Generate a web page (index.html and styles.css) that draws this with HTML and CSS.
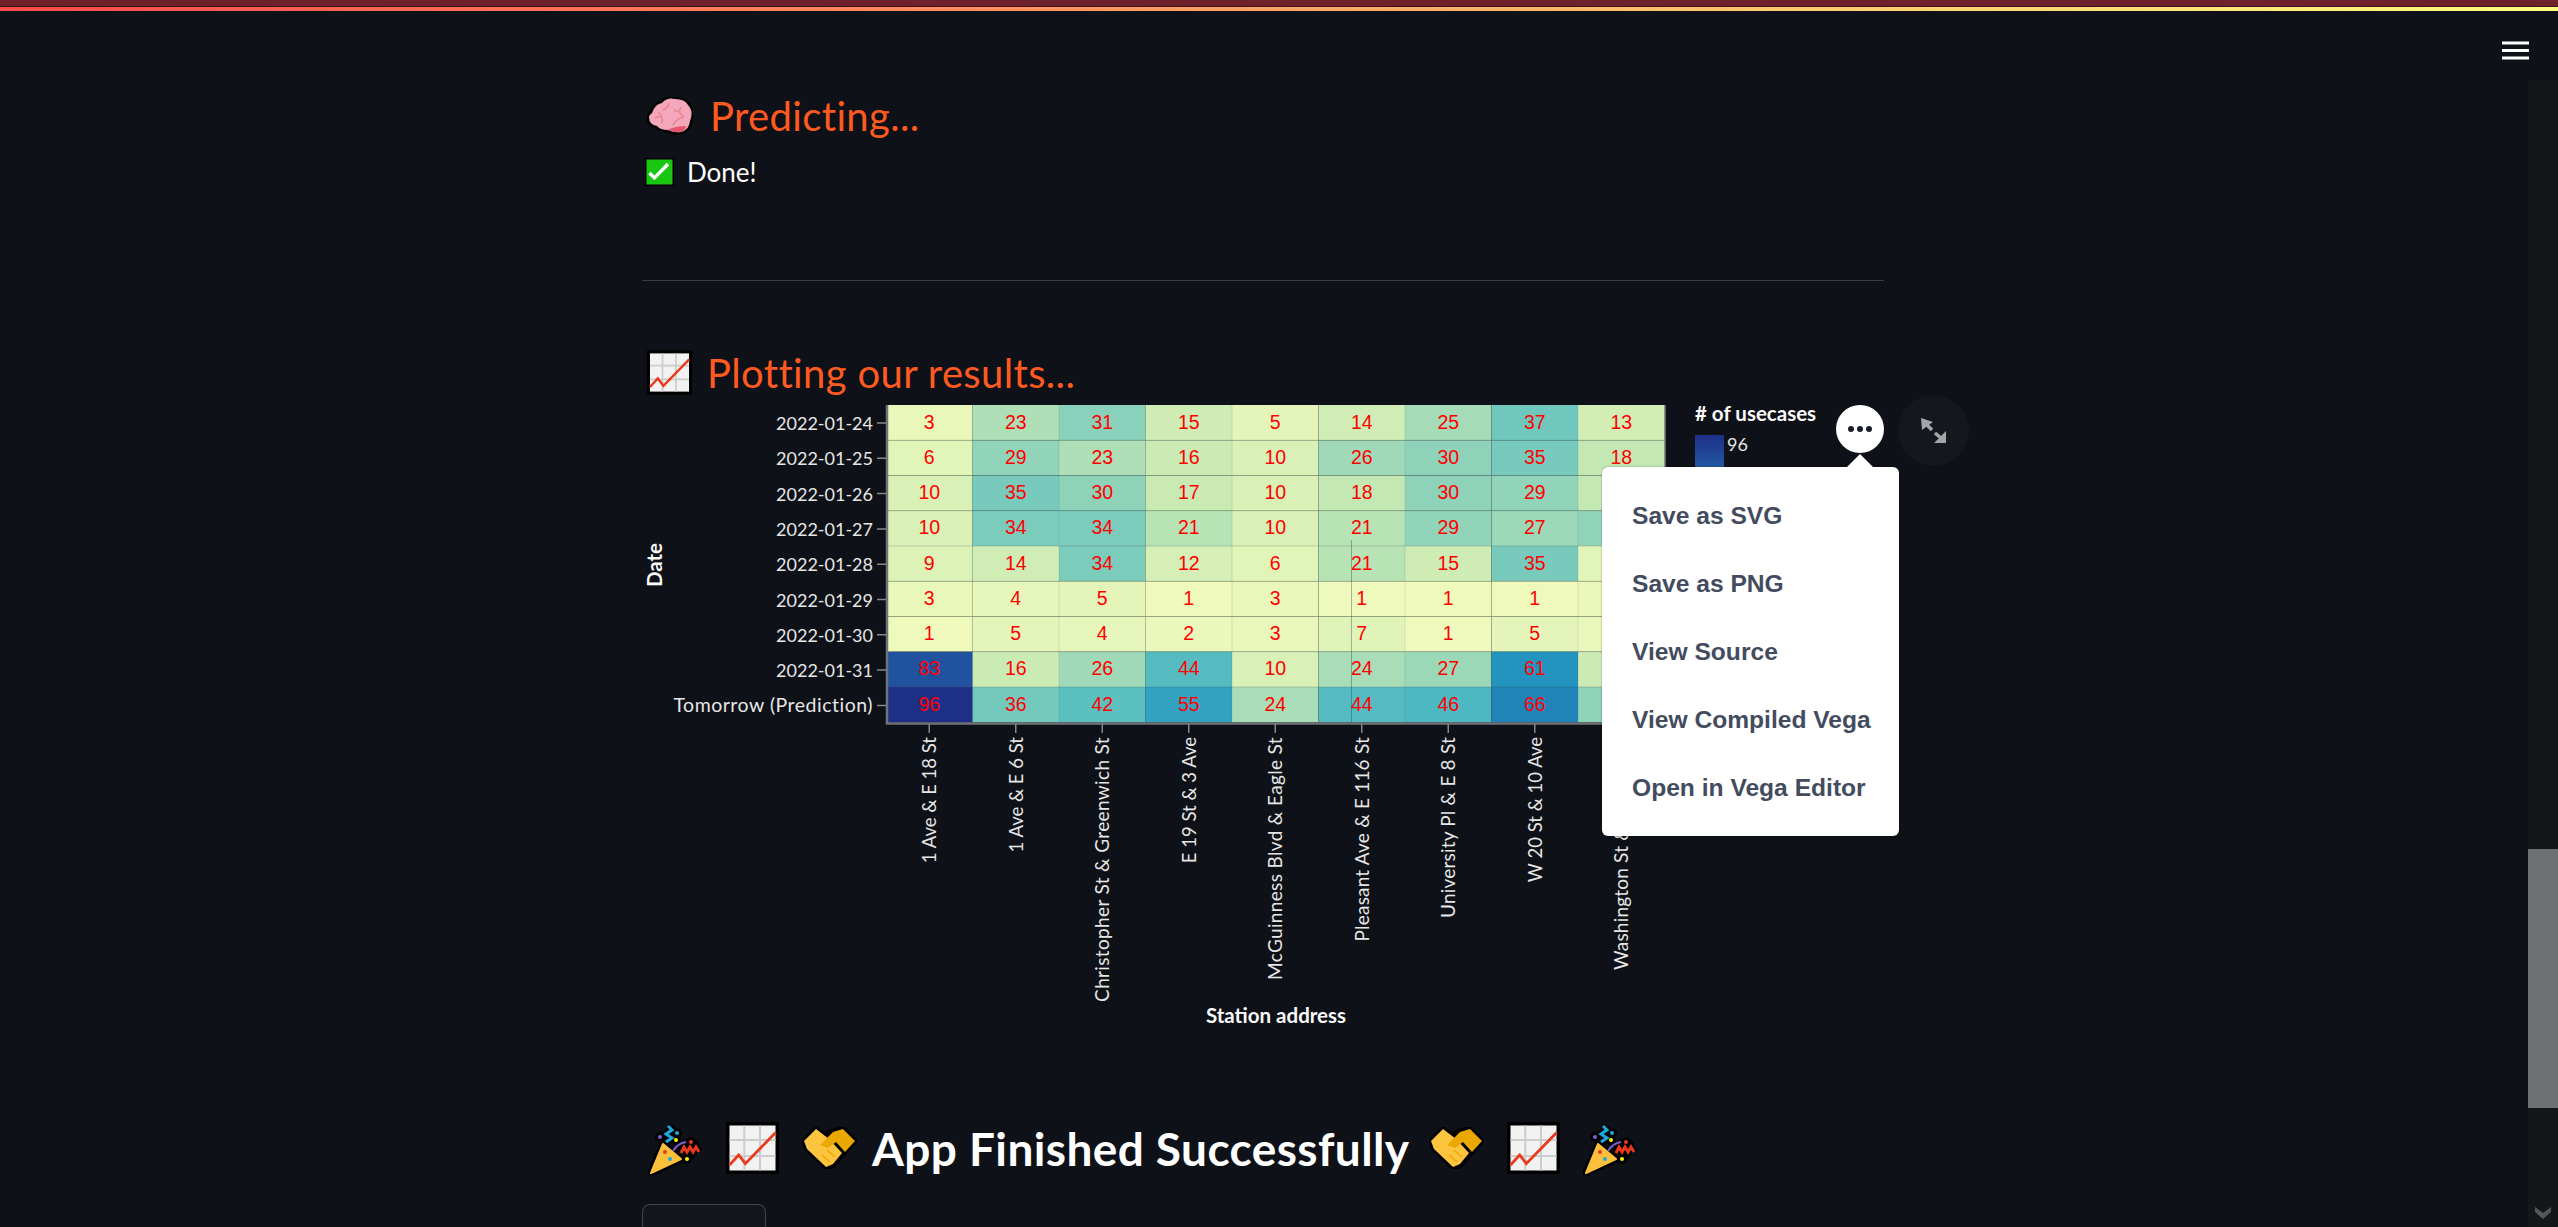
FILE: index.html
```html
<!DOCTYPE html>
<html lang="en">
<head>
<meta charset="utf-8">
<title>App</title>
<link rel="stylesheet" href="styles.css">
</head>
<body>
<svg class="defs" width="0" height="0">
  <symbol id="e-chart" viewBox="0 0 53 52">
    <rect width="53" height="52" fill="#000"/>
    <rect x="3.5" y="3.5" width="46" height="45" fill="#f2f2f2"/>
    <path d="M18.3 3.5V48.5M34 3.5V48.5M3.5 18H49.5M3.5 34H49.5" stroke="#ccc" stroke-width="2" fill="none"/>
    <path d="M3.5 43L12.7 33L19.3 41.7L49.7 10.5" stroke="#ea3a1c" stroke-width="2.8" fill="none"/>
  </symbol>
  <symbol id="e-brain" viewBox="0 0 46 38">
    <path d="M5 16Q8 7 15 6Q20 0 28 2Q38 2 41 8Q47 14 43 24Q42 33 34 35Q27 36 21 33Q13 33 10 29Q2 28 2 20Q2 18 5 16Z" fill="#f4a7ba" stroke="#000" stroke-width="5" paint-order="stroke"/>
    <path d="M21 33Q28 29 39 29Q38 34 34 35Q27 36 21 33Z" fill="#e2566f"/>
    <path d="M11 15Q16 19 15 26M8 21L14 19M22 6Q21 11 16 13M34 10Q30 16 37 20M37 20Q30 21 26 28M27 13L32 15" stroke="#e98692" stroke-width="1.6" fill="none"/>
  </symbol>
  <symbol id="e-check" viewBox="0 0 29 28">
    <rect width="29" height="28" fill="#000"/>
    <rect x="1.5" y="1.5" width="26" height="25" fill="#19c612"/>
    <path d="M4.5 15L9.5 20L23 6" stroke="#fff" stroke-width="3.3" fill="none"/>
  </symbol>
  <symbol id="e-popper" viewBox="0 0 55 55">
    <g fill="#000">
      <path d="M15 23L33 38L3 52Z" stroke="#000" stroke-width="7" stroke-linejoin="round"/>
      <path d="M20 5L24 9L18 13L24 17L18 21" stroke="#000" stroke-width="8" fill="none"/>
      <path d="M33 32L36 26L39 31L42 26L45 31L48 26L51 31" stroke="#000" stroke-width="8" fill="none"/>
      <circle cx="12" cy="16" r="5"/><circle cx="29" cy="12" r="5"/><circle cx="43" cy="21" r="5"/><circle cx="39" cy="38" r="5"/><circle cx="28" cy="19" r="5"/>
    </g>
    <path d="M15 23L33 38L3 52Z" fill="#fcbf3c" stroke="#fcbf3c" stroke-width="2" stroke-linejoin="round"/>
    <path d="M25 30Q30 22 38 21" stroke="#7a5fcf" stroke-width="2" fill="none"/>
    <path d="M20 5L24 9L18 13L24 17L18 21" stroke="#1ba9e0" stroke-width="3" fill="none"/>
    <path d="M33 32L36 26L39 31L42 26L45 31L48 26L51 31" stroke="#e8391c" stroke-width="3" fill="none"/>
    <circle cx="17" cy="31" r="2" fill="#e8391c"/><circle cx="22" cy="38" r="2" fill="#1ba9e0"/>
    <circle cx="12" cy="16" r="2" fill="#7a5fcf"/><circle cx="29" cy="12" r="2" fill="#1ba9e0"/>
    <circle cx="43" cy="21" r="2" fill="#e8391c"/><circle cx="39" cy="38" r="2" fill="#fff200"/><circle cx="28" cy="19" r="2" fill="#fff200"/>
  </symbol>
  <symbol id="e-hands" viewBox="0 0 55 42">
    <path d="M2 14L14 2L23 8L30 4L41 2L53 14L42 26L31 39L24 40L5 22Z" fill="#000" stroke="#000" stroke-width="5" stroke-linejoin="round"/>
    <path d="M2 14L14 2L27 12L40 26L31 37L24 40L5 22Z" fill="#fdc440"/>
    <path d="M53 14L41 2L31 5L18 18L26 21L34 15L43 25Z" fill="#eba800"/>
    <path d="M20 28L28 35M25 23L33 30" stroke="#eba800" stroke-width="1.5" fill="none"/>
  </symbol>
</svg>

<header class="header">
  <div class="topbar"></div>
  <div class="topbar-line"></div>
  <svg class="hamburger" width="27" height="19" viewBox="0 0 27 19">
    <path d="M0 2H27M0 9.5H27M0 17H27" stroke="#fff" stroke-width="3"/>
  </svg>
</header>

<div class="page">
  <main class="main">
    <h2 class="subhead first"><svg class="emoji brain"><use href="#e-brain"/></svg><span>Predicting...</span></h2>
    <div class="done"><svg class="emoji check"><use href="#e-check"/></svg><span>Done!</span></div>
    <hr class="rule">
    <h2 class="subhead plot"><svg class="emoji chart-s"><use href="#e-chart"/></svg><span>Plotting our results...</span></h2>

    <div class="chart-wrap">
      <svg class="chart" width="1242" height="660" viewBox="642 399 1242 660">
        <defs>
          <linearGradient id="legend" x1="0" y1="0" x2="0" y2="1">
            <stop offset="0" stop-color="#1e2f87"/>
            <stop offset="0.2" stop-color="#2260a9"/>
            <stop offset="0.4" stop-color="#2090bf"/>
            <stop offset="0.6" stop-color="#45b5c4"/>
            <stop offset="0.8" stop-color="#a5dbb7"/>
            <stop offset="1" stop-color="#eef9bb"/>
          </linearGradient>
        </defs>
        <g class="heat">
          <g transform="translate(0 405)">
            <rect x="886" fill="#e9f7ba"/><rect x="972.5" fill="#aedfb6"/><rect x="1059" fill="#89d1ba"/><rect x="1145.5" fill="#ceecb4"/><rect x="1232" fill="#e5f5b9"/><rect x="1318.5" fill="#d0edb5"/><rect x="1405" fill="#a5dbb7"/><rect x="1491.5" fill="#70c7bd"/><rect x="1578" fill="#d2eeb5"/>
            <text x="929.25" y="23.5">3</text><text x="1015.75" y="23.5">23</text><text x="1102.25" y="23.5">31</text><text x="1188.75" y="23.5">15</text><text x="1275.25" y="23.5">5</text><text x="1361.75" y="23.5">14</text><text x="1448.25" y="23.5">25</text><text x="1534.75" y="23.5">37</text><text x="1621.25" y="23.5">13</text>
          </g>
          <g transform="translate(0 440.25)">
            <rect x="886" fill="#e2f5b9"/><rect x="972.5" fill="#92d4b9"/><rect x="1059" fill="#aedfb6"/><rect x="1145.5" fill="#cbebb4"/><rect x="1232" fill="#d9f1b7"/><rect x="1318.5" fill="#a0d9b8"/><rect x="1405" fill="#8ed2ba"/><rect x="1491.5" fill="#78cabc"/><rect x="1578" fill="#c4e8b4"/>
            <text x="929.25" y="23.5">6</text><text x="1015.75" y="23.5">29</text><text x="1102.25" y="23.5">23</text><text x="1188.75" y="23.5">16</text><text x="1275.25" y="23.5">10</text><text x="1361.75" y="23.5">26</text><text x="1448.25" y="23.5">30</text><text x="1534.75" y="23.5">35</text><text x="1621.25" y="23.5">18</text>
          </g>
          <g transform="translate(0 475.5)">
            <rect x="886" fill="#d9f1b7"/><rect x="972.5" fill="#78cabc"/><rect x="1059" fill="#8ed2ba"/><rect x="1145.5" fill="#c9eab3"/><rect x="1232" fill="#d9f1b7"/><rect x="1318.5" fill="#c4e8b4"/><rect x="1405" fill="#8ed2ba"/><rect x="1491.5" fill="#92d4b9"/><rect x="1578" fill="#c4e8b4"/>
            <text x="929.25" y="23.5">10</text><text x="1015.75" y="23.5">35</text><text x="1102.25" y="23.5">30</text><text x="1188.75" y="23.5">17</text><text x="1275.25" y="23.5">10</text><text x="1361.75" y="23.5">18</text><text x="1448.25" y="23.5">30</text><text x="1534.75" y="23.5">29</text>
          </g>
          <g transform="translate(0 510.75)">
            <rect x="886" fill="#d9f1b7"/><rect x="972.5" fill="#7cccbc"/><rect x="1059" fill="#7cccbc"/><rect x="1145.5" fill="#b7e3b5"/><rect x="1232" fill="#d9f1b7"/><rect x="1318.5" fill="#b7e3b5"/><rect x="1405" fill="#92d4b9"/><rect x="1491.5" fill="#9bd8b8"/><rect x="1578" fill="#92d4b9"/>
            <text x="929.25" y="23.5">10</text><text x="1015.75" y="23.5">34</text><text x="1102.25" y="23.5">34</text><text x="1188.75" y="23.5">21</text><text x="1275.25" y="23.5">10</text><text x="1361.75" y="23.5">21</text><text x="1448.25" y="23.5">29</text><text x="1534.75" y="23.5">27</text>
          </g>
          <g transform="translate(0 546)">
            <rect x="886" fill="#dcf2b7"/><rect x="972.5" fill="#d0edb5"/><rect x="1059" fill="#7cccbc"/><rect x="1145.5" fill="#d5efb6"/><rect x="1232" fill="#e2f5b9"/><rect x="1318.5" fill="#b7e3b5"/><rect x="1405" fill="#ceecb4"/><rect x="1491.5" fill="#78cabc"/><rect x="1578" fill="#e2f5b9"/>
            <text x="929.25" y="23.5">9</text><text x="1015.75" y="23.5">14</text><text x="1102.25" y="23.5">34</text><text x="1188.75" y="23.5">12</text><text x="1275.25" y="23.5">6</text><text x="1361.75" y="23.5">21</text><text x="1448.25" y="23.5">15</text><text x="1534.75" y="23.5">35</text>
          </g>
          <g transform="translate(0 581.25)">
            <rect x="886" fill="#e9f7ba"/><rect x="972.5" fill="#e7f6ba"/><rect x="1059" fill="#e5f5b9"/><rect x="1145.5" fill="#eef9bb"/><rect x="1232" fill="#e9f7ba"/><rect x="1318.5" fill="#eef9bb"/><rect x="1405" fill="#eef9bb"/><rect x="1491.5" fill="#eef9bb"/><rect x="1578" fill="#e9f7ba"/>
            <text x="929.25" y="23.5">3</text><text x="1015.75" y="23.5">4</text><text x="1102.25" y="23.5">5</text><text x="1188.75" y="23.5">1</text><text x="1275.25" y="23.5">3</text><text x="1361.75" y="23.5">1</text><text x="1448.25" y="23.5">1</text><text x="1534.75" y="23.5">1</text>
          </g>
          <g transform="translate(0 616.5)">
            <rect x="886" fill="#eef9bb"/><rect x="972.5" fill="#e5f5b9"/><rect x="1059" fill="#e7f6ba"/><rect x="1145.5" fill="#ecf8bb"/><rect x="1232" fill="#e9f7ba"/><rect x="1318.5" fill="#e0f4b8"/><rect x="1405" fill="#eef9bb"/><rect x="1491.5" fill="#e5f5b9"/><rect x="1578" fill="#e9f7ba"/>
            <text x="929.25" y="23.5">1</text><text x="1015.75" y="23.5">5</text><text x="1102.25" y="23.5">4</text><text x="1188.75" y="23.5">2</text><text x="1275.25" y="23.5">3</text><text x="1361.75" y="23.5">7</text><text x="1448.25" y="23.5">1</text><text x="1534.75" y="23.5">5</text>
          </g>
          <g transform="translate(0 651.75)">
            <rect x="886" fill="#2152a0"/><rect x="972.5" fill="#cbebb4"/><rect x="1059" fill="#a0d9b8"/><rect x="1145.5" fill="#55bbc1"/><rect x="1232" fill="#d9f1b7"/><rect x="1318.5" fill="#a9ddb7"/><rect x="1405" fill="#9bd8b8"/><rect x="1491.5" fill="#2393bf"/><rect x="1578" fill="#cbebb4"/>
            <text x="929.25" y="23.5">83</text><text x="1015.75" y="23.5">16</text><text x="1102.25" y="23.5">26</text><text x="1188.75" y="23.5">44</text><text x="1275.25" y="23.5">10</text><text x="1361.75" y="23.5">24</text><text x="1448.25" y="23.5">27</text><text x="1534.75" y="23.5">61</text>
          </g>
          <g transform="translate(0 687)">
            <rect x="886" fill="#1e2f87"/><rect x="972.5" fill="#74c9bd"/><rect x="1059" fill="#5cbfc0"/><rect x="1145.5" fill="#32a2c1"/><rect x="1232" fill="#a9ddb7"/><rect x="1318.5" fill="#55bbc1"/><rect x="1405" fill="#4db8c2"/><rect x="1491.5" fill="#2084b9"/><rect x="1578" fill="#8ed2ba"/>
            <text x="929.25" y="23.5">96</text><text x="1015.75" y="23.5">36</text><text x="1102.25" y="23.5">42</text><text x="1188.75" y="23.5">55</text><text x="1275.25" y="23.5">24</text><text x="1361.75" y="23.5">44</text><text x="1448.25" y="23.5">46</text><text x="1534.75" y="23.5">66</text>
          </g>
        </g>
        <path class="grid" d="M886 440.25H1665M886 475.5H1665M886 510.75H1665M886 546H1665M886 581.25H1665M886 616.5H1665M886 651.75H1665M886 687H1665"/>
        <path class="grid-v" d="M1059 405V723M1232 405V723M1405 405V723M1578 405V723M1318.5 405V723M1491.5 405V723"/>
        <path class="stray" d="M1351.5 540V723"/>
        <path class="domain-r" d="M1665 405V723"/>
        <path class="domain" d="M887 405V723.5H1665"/>
        <path class="tick" d="M877 423H886M877 458.3H886M877 493.6H886M877 528.9H886M877 564.2H886M877 599.5H886M877 634.8H886M877 670.1H886M877 705.4H886M929.25 724V733M1015.75 724V733M1102.25 724V733M1188.75 724V733M1275.25 724V733M1361.75 724V733M1448.25 724V733M1534.75 724V733"/>
        <g class="ylabels">
          <text x="873" y="430">2022-01-24</text>
          <text x="873" y="465.3">2022-01-25</text>
          <text x="873" y="500.6">2022-01-26</text>
          <text x="873" y="535.9">2022-01-27</text>
          <text x="873" y="571.2">2022-01-28</text>
          <text x="873" y="606.5">2022-01-29</text>
          <text x="873" y="641.8">2022-01-30</text>
          <text x="873" y="677.1">2022-01-31</text>
          <text class="wide" x="873" y="712.4">Tomorrow (Prediction)</text>
        </g>
        <g class="xlabels">
          <text transform="translate(936 737) rotate(-90)">1 Ave &amp; E 18 St</text>
          <text transform="translate(1022.5 737) rotate(-90)">1 Ave &amp; E 6 St</text>
          <text class="long" transform="translate(1109 737) rotate(-90)">Christopher St &amp; Greenwich St</text>
          <text transform="translate(1195.5 737) rotate(-90)">E 19 St &amp; 3 Ave</text>
          <text class="long" transform="translate(1282 737) rotate(-90)">McGuinness Blvd &amp; Eagle St</text>
          <text class="mid" transform="translate(1368.5 737) rotate(-90)">Pleasant Ave &amp; E 116 St</text>
          <text class="mid" transform="translate(1455 737) rotate(-90)">University Pl &amp; E 8 St</text>
          <text transform="translate(1541.5 737) rotate(-90)">W 20 St &amp; 10 Ave</text>
          <text class="mid anchor-start" transform="translate(1628 970) rotate(-90)">Washington St &amp; Gansevoort St</text>
        </g>
        <text class="title" transform="translate(662 565) rotate(-90)">Date</text>
        <text class="title" x="1276" y="1023">Station address</text>
        <text class="title left" x="1695" y="421"># of usecases</text>
        <rect x="1695" y="435" width="29" height="200" fill="url(#legend)"/>
        <text class="legend-num" x="1727" y="451">96</text>
      </svg>

      <button class="fullscreen" type="button" aria-label="Fullscreen">
        <svg width="71" height="71" viewBox="0 0 71 71">
          <path d="M23 23L35 27L24 35ZM48 48L36 48L48 36Z" fill="#a5a5a8"/>
          <path d="M28 29L34 35M37 38L43 43" stroke="#a5a5a8" stroke-width="3.5"/>
        </svg>
      </button>
      <button class="dots" type="button" aria-label="Actions"><i></i><i></i><i></i></button>
      <div class="menu">
        <a>Save as SVG</a>
        <a>Save as PNG</a>
        <a>View Source</a>
        <a>View Compiled Vega</a>
        <a>Open in Vega Editor</a>
      </div>
    </div>

    <h1 class="finish">
      <svg class="emoji popper"><use href="#e-popper"/></svg>
      <svg class="emoji chart-l"><use href="#e-chart"/></svg>
      <svg class="emoji hands"><use href="#e-hands"/></svg>
      <span class="finish-text">App Finished Successfully</span>
      <svg class="emoji hands"><use href="#e-hands"/></svg>
      <svg class="emoji chart-l"><use href="#e-chart"/></svg>
      <svg class="emoji popper"><use href="#e-popper"/></svg>
    </h1>
    <div class="stub-button"></div>
  </main>
  <aside class="scrollbar">
    <div class="thumb"></div>
    <svg class="chevron" width="16" height="12" viewBox="0 0 16 12"><path d="M0 0L8 6L16 0V5L8 12L0 5Z" fill="#55565a"/></svg>
  </aside>
</div>
</body>
</html>
```

FILE: styles.css
```css
* { box-sizing: border-box; }
html, body { margin: 0; height: 100%; }
body {
  background: #0e1117;
  color: #fff;
  font-family: Lato, "Open Sans", sans-serif;
  overflow: hidden;
}
.defs { position: absolute; }

.header {
  position: fixed;
  top: 0; left: 0; right: 0;
  height: 80px;
  background: #0e1117;
  z-index: 5;
}
.topbar { height: 6px; background: #6f212b; }
.topbar-line {
  height: 5px;
  border-top: 1px solid #3c1118;
  background: linear-gradient(90deg, #ff4b4b, #fffd80);
}
.hamburger { position: absolute; top: 41px; right: 29px; }

.page { display: flex; height: 1227px; }
.main {
  flex: 1;
  min-width: 0;
  padding: 97px 644px 0 642px;
  position: relative;
}
.scrollbar {
  width: 30px;
  background: #15161a;
  display: flex;
  flex-direction: column;
  align-items: center;
  padding: 849px 0 8px;
}
.thumb { width: 30px; height: 259px; background: #6f7073; }
.chevron { margin-top: auto; }

.emoji { display: block; flex: none; overflow: visible; }
.brain { width: 46px; height: 38px; }
.check { width: 29px; height: 28px; }
.chart-s { width: 45px; height: 45px; }
.chart-l { width: 53px; height: 52px; }
.popper { width: 55px; height: 55px; }
.hands { width: 55px; height: 42px; }

.subhead {
  display: flex;
  align-items: center;
  margin: 0;
  font-weight: 400;
  font-size: 40px;
  color: #ff5a1f;
  letter-spacing: 0.35px;
}
.subhead.first { height: 38px; padding-left: 5px; gap: 17px; }
.subhead.plot { height: 45px; margin-top: 69px; padding-left: 5px; gap: 15px; }

.done {
  display: flex;
  align-items: center;
  gap: 13px;
  height: 29px;
  margin-top: 22px;
  padding-left: 3px;
  font-size: 26px;
}
.rule {
  height: 1px;
  margin: 94px 0 0;
  border: 0;
  background: #3a3c42;
}

.chart-wrap { position: relative; height: 660px; margin-top: 4px; }
.chart { display: block; overflow: visible; }
.heat rect { width: 86.5px; height: 35.25px; }
.heat text {
  font-family: "Liberation Sans", Arial, sans-serif;
  font-size: 19.5px;
  fill: #ff0000;
  text-anchor: middle;
}
.grid { stroke: rgba(60, 80, 80, 0.24); stroke-width: 1; fill: none; }
.grid-v { stroke: rgba(40, 80, 80, 0.13); stroke-width: 1; fill: none; }
.stray { stroke: rgba(30, 50, 60, 0.35); stroke-width: 1; fill: none; }
.domain { stroke: #707377; stroke-width: 2.5; fill: none; }
.domain-r { stroke: #aab0a0; stroke-width: 1; fill: none; }
.tick { stroke: #888; stroke-width: 1.5; fill: none; }
.ylabels text, .xlabels text {
  font-size: 18.5px;
  fill: #e6e6e6;
  text-anchor: end;
}
.ylabels text { font-size: 18px; }
.ylabels .wide { font-size: 19.5px; letter-spacing: 0.5px; }
.xlabels .mid { font-size: 19px; letter-spacing: 0.2px; }
.xlabels .long { font-size: 19px; letter-spacing: 0.35px; }
.xlabels .anchor-start { text-anchor: start; }
.title {
  font-size: 20.5px;
  font-weight: 700;
  fill: #fafafa;
  text-anchor: middle;
}
.title.left { text-anchor: start; }
.legend-num { font-size: 18px; fill: #e6e6e6; }

.dots {
  position: absolute;
  left: 1194px; top: 6px;
  width: 48px; height: 48px;
  border: 0; padding: 0;
  border-radius: 50%;
  background: #fff;
  display: flex;
  align-items: center;
  justify-content: center;
  gap: 3px;
  z-index: 3;
}
.dots i { width: 6px; height: 6px; border-radius: 50%; background: #1b1e2a; }
.dots::after {
  content: "";
  position: absolute;
  left: 11px; top: 49px;
  border: 13px solid transparent;
  border-top: 0;
  border-bottom-color: #fff;
}
.fullscreen {
  position: absolute;
  left: 1256px; top: -4px;
  width: 71px; height: 71px;
  border: 0; padding: 0;
  border-radius: 50%;
  background: #14171e;
}
.fullscreen svg { display: block; }
.menu {
  position: absolute;
  left: 960px; top: 68px;
  width: 297px; height: 369px;
  padding: 15px 0 0 30px;
  background: #fff;
  border-radius: 6px;
  box-shadow: 0 0 2px rgba(0, 0, 0, 0.4);
  font-family: "Liberation Sans", Arial, sans-serif;
  font-weight: 700;
  font-size: 24.6px;
  color: #434c5e;
  z-index: 2;
}
.menu a { display: block; height: 68px; line-height: 68px; white-space: nowrap; }

.finish {
  display: flex;
  align-items: center;
  gap: 23px;
  height: 52px;
  margin: 63px 0 0;
  padding-left: 6px;
  font-size: 46px;
  font-weight: 700;
  letter-spacing: 0.4px;
  color: #fff;
  white-space: nowrap;
}
.finish-text { margin: 0 -3px 0 -8px; }
.stub-button {
  width: 124px;
  height: 60px;
  margin-top: 30px;
  background: #13161d;
  border: 1px solid rgba(250, 250, 250, 0.2);
  border-radius: 8px;
}
```
